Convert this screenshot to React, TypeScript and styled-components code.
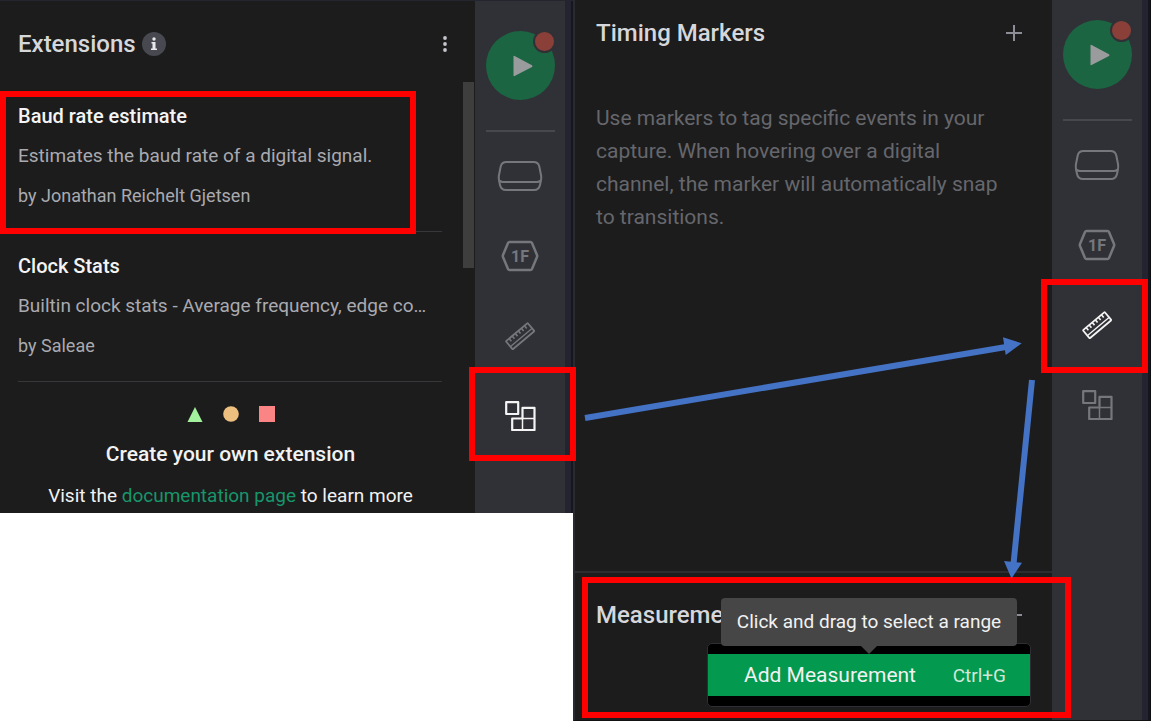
import React from 'react';
import styled, { createGlobalStyle, css } from 'styled-components';

const GlobalStyle = createGlobalStyle`
  *, *::before, *::after { box-sizing: border-box; }
  body {
    margin: 0;
    background: #fff;
    font-family: Roboto, "Liberation Sans", sans-serif;
    color: #f2f2f2;
  }
  h1, h2, h3, p, ul { margin: 0; padding: 0; }
  button { border: 0; padding: 0; background: none; color: inherit; font: inherit; cursor: pointer; }
`;

const Page = styled.main`
  position: relative;
  display: grid;
  grid-template-columns: minmax(0, 573fr) minmax(0, 578fr);
  align-items: start;
  min-height: 100vh;
`;

const AppWindow = styled.section<{ $tall?: boolean }>`
  position: relative;
  display: flex;
  background: #1c1c1c;
  ${(p) =>
    p.$tall
      ? css`
          min-height: 100vh;
          border-left: 2px solid #292a30;
          border-right: 1px solid #0d0e14;
          border-bottom: 1px solid #111;
        `
      : css`
          z-index: 1;
          border-top: 1px solid #23252f;
        `}
`;

const Panel = styled.div`
  position: relative;
  display: flex;
  flex-direction: column;
  flex: 1;
  min-width: 0;
`;

const Header = styled.header<{ $kind: 'extensions' | 'section' }>`
  display: flex;
  align-items: center;
  justify-content: space-between;
  padding: ${(p) => (p.$kind === 'extensions' ? '28px 22px 23px 18px' : '18px 30px 0 21px')};
`;

const HeaderTitle = styled.div`
  display: flex;
  align-items: center;
  gap: 6px;
`;

const Title = styled.h1`
  font-size: 24px;
  line-height: 30px;
  font-weight: 500;
  color: #d6d7db;
`;

const IconButton = styled.button`
  display: grid;
  place-items: center;
  flex: none;
  width: 16px;
  height: 24px;
  color: #8c8d96;
`;

const InfoButton = styled(IconButton)`
  width: 24px;
  border-radius: 50%;
  background: #484950;
  color: #e8e8ea;
`;

const ListArea = styled.div`
  display: flex;
  align-items: flex-start;
  justify-content: space-between;
`;

const List = styled.ul`
  flex: 1;
  min-width: 0;
  list-style: none;
  margin: 0 21px 0 18px;
`;

const Item = styled.li`
  position: relative;
  display: grid;
  gap: 14px;
  padding: 21px 0 22px;
  border-bottom: 1px solid #36373b;
`;

const ItemTitle = styled.h2`
  font-size: 20px;
  line-height: 26px;
  font-weight: 500;
  color: #f4f4f4;
`;

const ItemText = styled.p`
  min-width: 0;
  padding-right: 10px;
  overflow: hidden;
  font-size: 19px;
  line-height: 26px;
  white-space: nowrap;
  text-overflow: ellipsis;
  color: #a9aab0;
`;

const ItemAuthor = styled(ItemText)`
  font-size: 18px;
`;

const ScrollThumb = styled.div`
  flex: none;
  width: 11px;
  height: 186px;
  margin-right: 1px;
  background: #3e3e3e;
`;

const Promo = styled.div`
  display: flex;
  flex-direction: column;
  align-items: center;
  padding: 24px 32px 3px 18px;
  line-height: 28px;
  font-size: 19px;
`;

const PromoTitle = styled.h2`
  margin: 18px 0 14px;
  font-size: 21px;
  line-height: 28px;
  font-weight: 500;
`;

const DocLink = styled.a`
  color: #16966a;
  text-decoration: none;
`;

const Rail = styled.nav<{ $top: number }>`
  display: flex;
  flex-direction: column;
  align-items: center;
  flex: none;
  width: 98px;
  padding: ${(p) => p.$top}px 6px 0 0;
  background: #303136;
  border-right: 2px solid #15161e;
  box-shadow: inset -6px 0 #23242f;
`;

const PlayButton = styled.button`
  position: relative;
  display: grid;
  place-items: center;
  width: 69px;
  height: 69px;
  border-radius: 50%;
  background: #1b6542;
`;

const RecordDot = styled.span`
  position: absolute;
  top: -1px;
  right: -1px;
  width: 23px;
  height: 23px;
  border: 2px solid #303136;
  border-radius: 50%;
  background: #8a4038;
`;

const RailDivider = styled.hr`
  width: 69px;
  height: 2px;
  margin: 30px 0 4px;
  border: 0;
  background: #47484d;
`;

const RailButton = styled.button<{ $active?: boolean }>`
  position: relative;
  display: grid;
  place-items: center;
  width: 90px;
  height: 80px;
  color: ${(p) => (p.$active ? '#f4f4f4' : '#76777c')};
`;

const Highlight = styled.span<{ $inset: string }>`
  position: absolute;
  z-index: 3;
  inset: ${(p) => p.$inset};
  border: 6px solid #fe0000;
  pointer-events: none;
`;

const Hint = styled.p`
  padding: 54px 40px 0 21px;
  font-size: 21px;
  line-height: 33px;
  color: #66676d;
`;

const Markers = styled.section`
  flex: 1;
`;

const Measurements = styled.section`
  position: relative;
  min-height: 149px;
  padding-top: 9px;
  border-top: 2px solid #2c2d31;
`;

const Menu = styled.div`
  position: absolute;
  top: 70px;
  right: 21px;
  width: 324px;
  padding: 10px 0;
  border: 1px solid #2e2e34;
  border-radius: 5px;
  background: #000;
`;

const MenuItem = styled.button`
  display: flex;
  align-items: center;
  justify-content: space-between;
  width: 100%;
  height: 42px;
  padding: 0 24px 0 36px;
  background: #039a4f;
  font-size: 21px;
`;

const Shortcut = styled.kbd`
  font-family: inherit;
  font-size: 19px;
  color: #cfe6d9;
`;

const Tooltip = styled.div`
  position: absolute;
  z-index: 2;
  top: 25px;
  right: 35px;
  width: 296px;
  border-radius: 4px;
  background: #464646;
  font-size: 19px;
  line-height: 48px;
  text-align: center;
  white-space: nowrap;

  &::after {
    content: '';
    position: absolute;
    top: 100%;
    left: 50%;
    margin-left: -8px;
    border: 8px solid transparent;
    border-top-color: #464646;
    border-bottom: 0;
  }
`;

const Arrows = styled.svg`
  position: absolute;
  z-index: 4;
  top: 330px;
  right: 111px;
  pointer-events: none;
`;

const PlayGlyph = styled.svg`
  margin-left: 5px;
`;

const PlayIcon = () => (
  <PlayGlyph width="20" height="22" viewBox="0 0 20 22" aria-hidden="true">
    <path d="M.5 1.600v18.800q0 1.200 1.100.6L19 12q1-.9 0-1.800L1.600 1Q.5.400.5 1.600z" fill="#999b9c" />
  </PlayGlyph>
);

const DeviceIcon = () => (
  <svg width="46" height="32" viewBox="0 0 46 32" fill="none" stroke="currentColor" strokeWidth="2" aria-hidden="true">
    <path d="M9.500 2h27q4.800 0 5.800 4.500L44 15q.5 2.500 0 5l-1 5Q41.900 30 37 30H9q-4.900 0-6-5l-1-5q-.5-2.500 0-5L3.700 6.500q1-4.500 5.800-4.500z" />
    <path d="M2.200 20.500q1.300 1.500 3.800 1.500h34q2.500 0 3.800-1.500" />
  </svg>
);

const AnalyzerIcon = () => (
  <svg width="38" height="32" viewBox="0 0 38 32" aria-hidden="true">
    <path d="M8.500 2h21q1 0 1.500 1l5 12q.4 1 0 2l-5 12q-.5 1-1.500 1h-21q-1 0-1.500-1L2 17q-.4-1 0-2L7 3q.5-1 1.500-1z" fill="none" stroke="currentColor" strokeWidth="2.500" />
    <text x="19" y="22" textAnchor="middle" fontFamily="Roboto, sans-serif" fontWeight="700" fontSize="16" fill="currentColor">1F</text>
  </svg>
);

const RulerIcon = () => (
  <svg width="32" height="30" viewBox="0 0 32 30" fill="none" stroke="currentColor" strokeWidth="1.800" aria-hidden="true">
    <g transform="rotate(-40 16 15)">
      <rect x="1.800" y="10" width="28.400" height="10.500" rx="0.600" />
      <path d="M2 17h28" strokeWidth="1.400" />
      <path d="M6 10v3.500M10 10v3.500M14 10v3.500M18 10v3.500M22 10v3.500M26 10v3.500" strokeWidth="1.600" />
    </g>
  </svg>
);

const ExtensionsIcon = () => (
  <svg width="31" height="30" viewBox="0 0 31 30" fill="none" stroke="currentColor" strokeWidth="2.200" strokeLinejoin="round" aria-hidden="true">
    <rect x="1.200" y="1.200" width="12" height="11.800" />
    <path d="M17.500 6.800h12v22.200H7.200V17.500h10.300z" />
    <path d="M17.500 17.500h12M17.500 17.500V29" strokeWidth="1.500" />
  </svg>
);

const PlusIcon = () => (
  <svg width="16" height="16" viewBox="0 0 16 16" stroke="currentColor" strokeWidth="2" aria-hidden="true">
    <path d="M8 0v16M0 8h16" />
  </svg>
);

const ShapesIcon = () => (
  <svg width="88" height="16" viewBox="0 0 88 16" aria-hidden="true">
    <path d="M8 1l7.500 15H.5z" fill="#a3f19c" />
    <circle cx="44" cy="8" r="7.800" fill="#edc07f" />
    <rect x="72" y="0" width="16" height="16" fill="#fb8484" />
  </svg>
);

type Tool = 'measure' | 'extensions';

const ToolRail = ({ top, active }: { top: number; active: Tool }) => (
  <Rail $top={top} aria-label="Tools">
    <PlayButton aria-label="Start capture">
      <PlayIcon />
      <RecordDot />
    </PlayButton>
    <RailDivider />
    <RailButton aria-label="Device"><DeviceIcon /></RailButton>
    <RailButton aria-label="Analyzers"><AnalyzerIcon /></RailButton>
    <RailButton aria-label="Measurements" $active={active === 'measure'}>
      <RulerIcon />
      {active === 'measure' && <Highlight $inset="-6px -6px -8px -11px" />}
    </RailButton>
    <RailButton aria-label="Extensions" $active={active === 'extensions'}>
      <ExtensionsIcon />
      {active === 'extensions' && <Highlight $inset="-9px -11px -5px -6px" />}
    </RailButton>
  </Rail>
);

const extensions = [
  { name: 'Baud rate estimate', text: 'Estimates the baud rate of a digital signal.', author: 'Jonathan Reichelt Gjetsen', marked: true },
  { name: 'Clock Stats', text: 'Builtin clock stats - Average frequency, edge count and more', author: 'Saleae', marked: false },
];

export default function App() {
  return (
    <>
      <GlobalStyle />
      <Page>
        <AppWindow>
          <Panel>
            <Header $kind="extensions">
              <HeaderTitle>
                <Title>Extensions</Title>
                <InfoButton aria-label="About extensions">
                  <svg width="6" height="14" viewBox="0 0 6 14" fill="currentColor" aria-hidden="true">
                    <circle cx="3" cy="2" r="1.700" />
                    <path d="M.5 5h4v6.500H6V13H0v-1.500h1.500v-5h-1z" />
                  </svg>
                </InfoButton>
              </HeaderTitle>
              <IconButton aria-label="More options">
                <svg width="4" height="18" viewBox="0 0 4 18" fill="#c4c5ca" aria-hidden="true">
                  <circle cx="2" cy="3" r="1.900" />
                  <circle cx="2" cy="9" r="1.900" />
                  <circle cx="2" cy="15" r="1.900" />
                </svg>
              </IconButton>
            </Header>
            <ListArea>
              <List>
                {extensions.map((e) => (
                  <Item key={e.name}>
                    <ItemTitle>{e.name}</ItemTitle>
                    <ItemText>{e.text}</ItemText>
                    <ItemAuthor>by {e.author}</ItemAuthor>
                    {e.marked && <Highlight $inset="9px 26px -3px -18px" />}
                  </Item>
                ))}
              </List>
              <ScrollThumb />
            </ListArea>
            <Promo>
              <ShapesIcon />
              <PromoTitle>Create your own extension</PromoTitle>
              <p>
                Visit the <DocLink href="#documentation">documentation page</DocLink> to learn more
              </p>
            </Promo>
          </Panel>
          <ToolRail top={30} active="extensions" />
        </AppWindow>

        <AppWindow $tall>
          <Panel>
            <Markers>
              <Header $kind="section">
                <Title>Timing Markers</Title>
                <IconButton aria-label="Add timing marker"><PlusIcon /></IconButton>
              </Header>
              <Hint>
                Use markers to tag specific events in your capture. When hovering over a digital
                channel, the marker will automatically snap to transitions.
              </Hint>
            </Markers>
            <Measurements>
              <Header $kind="section">
                <Title>Measurements</Title>
                <IconButton aria-label="Add measurement"><PlusIcon /></IconButton>
              </Header>
              <Menu role="menu">
                <MenuItem role="menuitem">
                  Add Measurement <Shortcut>Ctrl+G</Shortcut>
                </MenuItem>
              </Menu>
              <Tooltip role="tooltip">Click and drag to select a range</Tooltip>
              <Highlight $inset="4px -19px 2px 7px" />
            </Measurements>
          </Panel>
          <ToolRail top={20} active="measure" />
        </AppWindow>
        <Arrows width="460" height="250" viewBox="580 330 460 250" fill="#4472c4" aria-hidden="true">
          <path d="M585 418L1006 347" stroke="#4472c4" strokeWidth="6" />
          <path d="M1021.700 343.300L1003 337.300l2.700 17.700z" />
          <path d="M1032 380L1013.500 564" stroke="#4472c4" strokeWidth="6" />
          <path d="M1011.500 578.500L1004 561l18 1.800z" />
        </Arrows>
      </Page>
    </>
  );
}
